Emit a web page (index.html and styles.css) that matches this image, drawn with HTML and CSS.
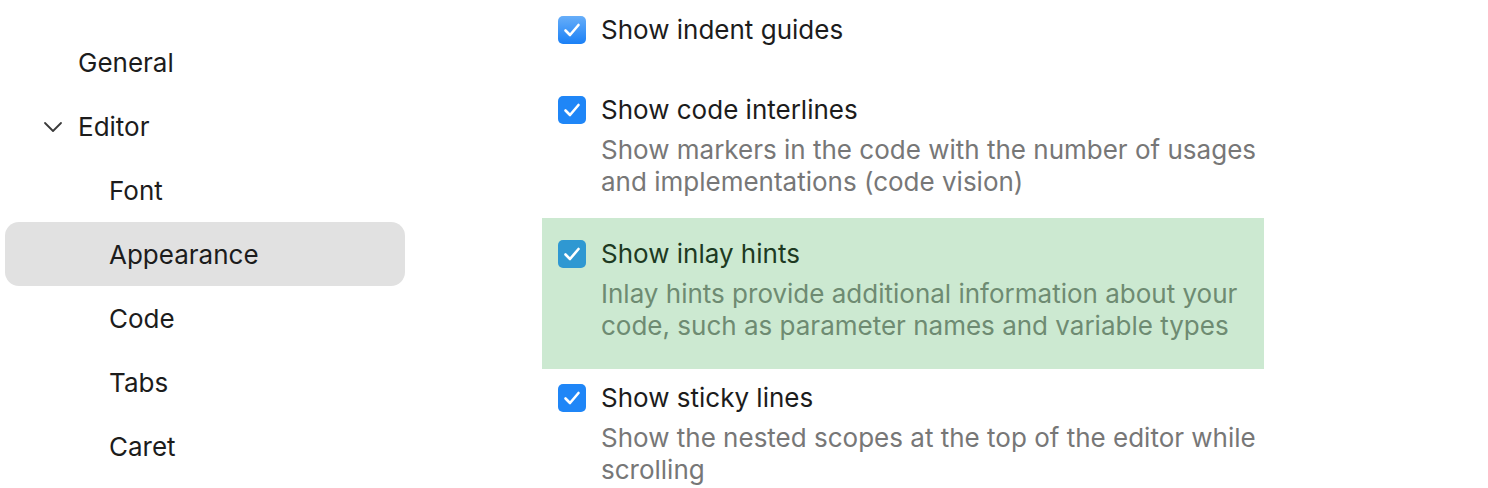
FILE: index.html
```html
<!DOCTYPE html>
<html lang="en">

<head>
    <meta charset="UTF-8" />
    <meta name="viewport" content="width=device-width, initial-scale=1.0" />
    <title>Settings - Appearance</title>
    <link rel="stylesheet" href="styles.css">
</head>

<body>
    <main>
        <nav class="tree">
            <div class="node level1">General</div>
            <div class="node level1 open">
                <svg class="chevron" width="20" height="12" viewBox="0 0 20 12">
                    <path d="M2 2 L10 10 L18 2" fill="none" stroke="#3a3a3a" stroke-width="1.8" stroke-linecap="round" stroke-linejoin="round" />
                </svg>
                Editor
            </div>
            <div class="node level2">Font</div>
            <div class="node level2 selected">Appearance</div>
            <div class="node level2">Code</div>
            <div class="node level2">Tabs</div>
            <div class="node level2">Caret</div>
        </nav>

        <section class="options">
            <div class="option first">
                <span class="check gradient">
                    <svg width="28" height="28" viewBox="0 0 28 28"><path d="M7.5 14.5 L12 19 L20.5 9" /></svg>
                </span>
                <div class="body">
                    <div class="title">Show indent guides</div>
                </div>
            </div>

            <div class="option">
                <span class="check">
                    <svg width="28" height="28" viewBox="0 0 28 28"><path d="M7.5 14.5 L12 19 L20.5 9" /></svg>
                </span>
                <div class="body">
                    <div class="title">Show code interlines</div>
                    <p class="desc">Show markers in the code with the number of usages and implementations (code vision)</p>
                </div>
            </div>

            <div class="option found">
                <span class="check">
                    <svg width="28" height="28" viewBox="0 0 28 28"><path d="M7.5 14.5 L12 19 L20.5 9" /></svg>
                </span>
                <div class="body">
                    <div class="title">Show inlay hints</div>
                    <p class="desc">Inlay hints provide additional information about your code, such as parameter names and variable types</p>
                </div>
            </div>

            <div class="option">
                <span class="check">
                    <svg width="28" height="28" viewBox="0 0 28 28"><path d="M7.5 14.5 L12 19 L20.5 9" /></svg>
                </span>
                <div class="body">
                    <div class="title">Show sticky lines</div>
                    <p class="desc">Show the nested scopes at the top of the editor while scrolling</p>
                </div>
            </div>
        </section>
    </main>
</body>

</html>
```

FILE: styles.css
```css
html,
body {
    margin: 0;
    background: #ffffff;
    font-family: Inter, "Noto Sans", "Liberation Sans", sans-serif;
    font-size: 26px;
    color: #1c1c1c;
    overflow: hidden;
}

main {
    display: flex;
    height: 488px;
}

.tree {
    width: 400px;
    padding: 30px 0 0 5px;
    flex-shrink: 0;
}

.node {
    height: 64px;
    display: flex;
    align-items: center;
    border-radius: 14px;
    box-sizing: border-box;
}

.level1 {
    padding-left: 73px;
}

.level2 {
    padding-left: 104px;
}

.open {
    padding-left: 38px;
}

.chevron {
    margin-right: 15px;
    margin-top: 1px;
}

.selected {
    background-color: #e1e1e1;
}

.options {
    margin-left: 137px;
    margin-top: -6px;
    width: 722px;
}

.option {
    display: flex;
    gap: 15px;
    padding: 20px 0 20px 16px;
}

.option.first {
    padding-bottom: 28px;
}

.option.found {
    background-color: #cce9d1;
    padding-bottom: 27px;
    margin-bottom: -7px;
}

.check {
    width: 28px;
    height: 28px;
    margin-top: 2px;
    border-radius: 5px;
    background-color: #1f86f7;
    flex-shrink: 0;
}

.check.gradient {
    background: linear-gradient(#67aef9, #1a80f6);
}

.check svg path {
    fill: none;
    stroke: #ffffff;
    stroke-width: 2.6;
    stroke-linecap: round;
    stroke-linejoin: round;
}

.found .check {
    background-color: #2f98d2;
}

.body {
    flex: 1;
}

.title {
    line-height: 32px;
}

.desc {
    margin: 8px 0 0;
    line-height: 32px;
    color: #777777;
}

.found .title {
    color: #1d3a22;
}

.found .desc {
    color: #6e8b72;
}
```
